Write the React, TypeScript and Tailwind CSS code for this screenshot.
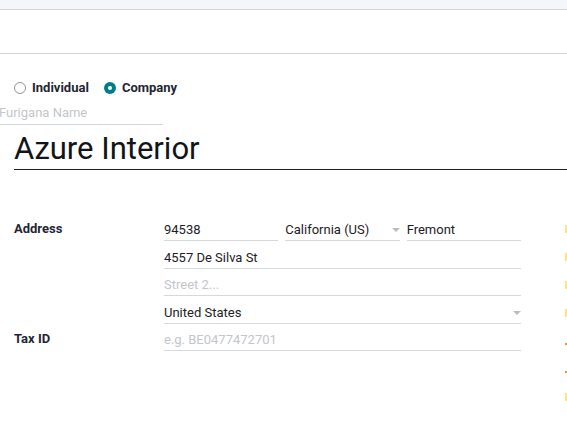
import React from 'react';

const Caret = () => (
  <svg width="8" height="4" viewBox="0 0 8 4" className="shrink-0">
    <path d="M0 0 L8 0 L4 4 Z" fill="#b9bcc0" />
  </svg>
);

const Radio = ({ checked, label }: { checked?: boolean; label: string }) => (
  <label className="flex items-center gap-[6px]">
    {checked ? (
      <span className="flex h-[12px] w-[12px] items-center justify-center rounded-full bg-[#017e84]">
        <span className="h-[4px] w-[4px] rounded-full bg-white" />
      </span>
    ) : (
      <span className="h-[12px] w-[12px] rounded-full border border-[#8f959b] bg-white" />
    )}
    <span className="font-bold text-[#1f2632]">{label}</span>
  </label>
);

type FieldProps = {
  value?: string;
  placeholder?: string;
  select?: boolean;
  h?: string;
};

const Field = ({ value, placeholder, select, h = 'h-[28px]' }: FieldProps) => (
  <div className={`${h} flex items-end justify-between border-b border-[#d6d9dc] pb-[2px]`}>
    {value ? (
      <span className="leading-[16px] text-[#1c2128]">{value}</span>
    ) : (
      <span className="leading-[16px] text-[#c3c6ca]">{placeholder}</span>
    )}
    {select && (
      <span className="mb-[6px]">
        <Caret />
      </span>
    )}
  </div>
);

const marks = ['yellow', 'yellow', 'yellow', 'yellow', 'orange', 'orange', 'yellow'];

export default function App() {
  return (
    <div className="h-[436px] w-[567px] overflow-hidden bg-white font-['Roboto',sans-serif] text-[13px]">
      {/* breadcrumb / control panel bands */}
      <div className="h-[10px] border-b border-[#d3d5d9] bg-[#f5f6f9]" />
      <div className="h-[44px] border-b border-[#d3d5d9]" />

      {/* company type */}
      <div className="mt-[26px] flex h-[15px] items-center gap-[15px] pl-[14px]">
        <Radio label="Individual" />
        <Radio label="Company" checked />
      </div>

      {/* furigana */}
      <div className="mt-[9px] -ml-[1px] h-[21px] w-[164px] border-b border-[#d3d6d9] leading-[17px] text-[#c3c6ca]">
        Furigana Name
      </div>

      {/* partner name */}
      <div className="ml-[14px] mt-[5px] border-b border-[#1c2128] pb-[2px] text-[31px] leading-[37px] text-[#111418]">
        Azure Interior
      </div>

      {/* address block */}
      <div className="mt-[43px] flex pl-[14px]">
        <div className="w-[507px]">
          <div className="flex">
            <div className="w-[150px] pt-[8px] font-bold leading-[16px] text-[#1f2632]">Address</div>
            <div className="w-[357px]">
              <div className="grid grid-cols-3 gap-[7px]">
                <Field value="94538" />
                <Field value="California (US)" select />
                <Field value="Fremont" />
              </div>
              <Field value="4557 De Silva St" />
              <Field placeholder="Street 2..." h="h-[27px]" />
              <Field value="United States" select />
            </div>
          </div>
          <div className="flex">
            <div className="w-[150px] pt-[7px] font-bold leading-[16px] text-[#1f2632]">Tax ID</div>
            <div className="w-[357px]">
              <Field placeholder="e.g. BE0477472701" h="h-[27px]" />
            </div>
          </div>
        </div>
        <div className="flex-1" />
        <div className="flex w-[2px] flex-col gap-[20px] pt-[12px]">
          {marks.map((m, i) =>
            m === 'yellow' ? (
              <div key={i} className="h-[8px] w-[2px] bg-[#ffe08c]" />
            ) : (
              <div key={i} className="flex h-[8px] w-[2px] items-end">
                <div className="h-[2px] w-[2px] bg-[#e49a3a]" />
              </div>
            )
          )}
        </div>
      </div>
    </div>
  );
}
